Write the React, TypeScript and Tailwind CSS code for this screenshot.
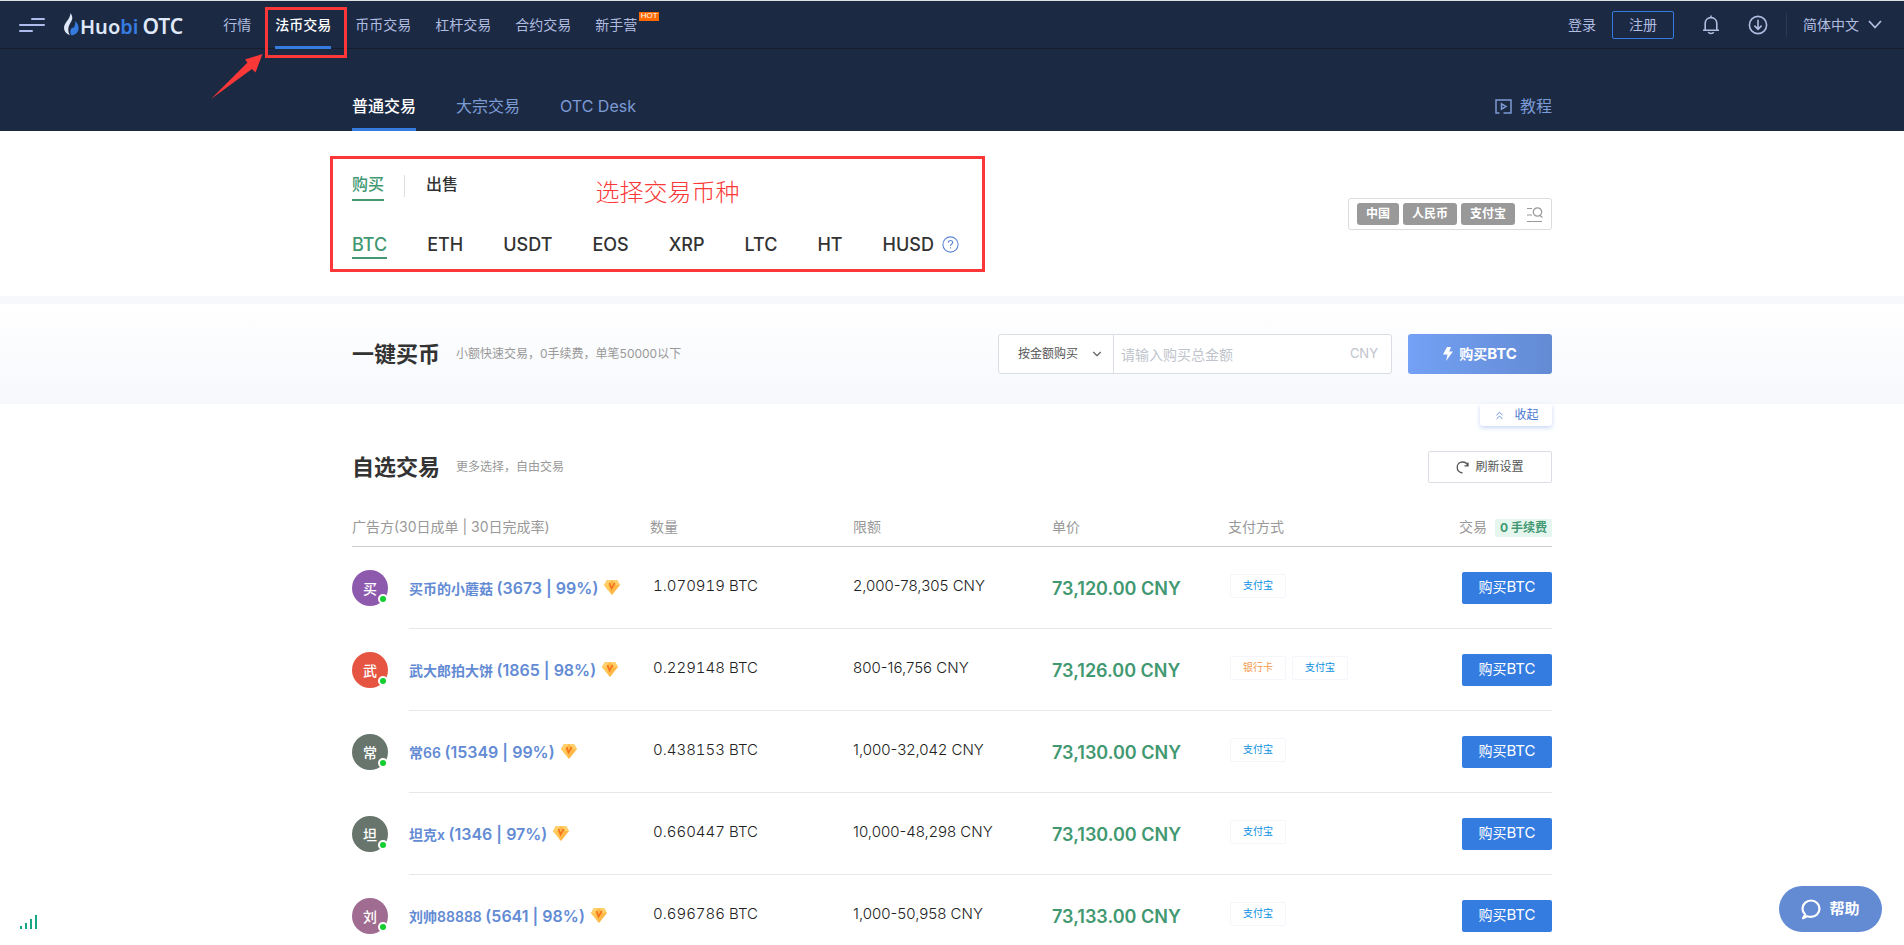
import { useState } from 'react'
import { ChevronDown, ChevronsUp } from 'lucide-react'
import clsx from 'clsx'

type Payment = 'alipay' | 'bank'

interface Offer {
  name: string
  orders: number
  rate: number
  avatarBg: string
  amount: string
  limit: string
  price: string
  payments: Payment[]
}

const NAV = ['行情', '法币交易', '币币交易', '杠杆交易', '合约交易', '新手营']
const MARKETS = ['普通交易', '大宗交易', 'OTC Desk']
const COINS = ['BTC', 'ETH', 'USDT', 'EOS', 'XRP', 'LTC', 'HT', 'HUSD']
const FILTERS = ['中国', '人民币', '支付宝']

const OFFERS: Offer[] = [
  { name: '买币的小蘑菇', orders: 3673, rate: 99, avatarBg: 'bg-[#8e5aae]', amount: '1.070919', limit: '2,000-78,305', price: '73,120.00', payments: ['alipay'] },
  { name: '武大郎拍大饼', orders: 1865, rate: 98, avatarBg: 'bg-[#e55541]', amount: '0.229148', limit: '800-16,756', price: '73,126.00', payments: ['bank', 'alipay'] },
  { name: '常66', orders: 15349, rate: 99, avatarBg: 'bg-[#67756d]', amount: '0.438153', limit: '1,000-32,042', price: '73,130.00', payments: ['alipay'] },
  { name: '坦克x', orders: 1346, rate: 97, avatarBg: 'bg-[#67756d]', amount: '0.660447', limit: '10,000-48,298', price: '73,130.00', payments: ['alipay'] },
  { name: '刘帅88888', orders: 5641, rate: 98, avatarBg: 'bg-[#a06c91]', amount: '0.696786', limit: '1,000-50,958', price: '73,133.00', payments: ['alipay'] },
]

const PAYMENT_LABEL: Record<Payment, string> = { alipay: '支付宝', bank: '银行卡' }
const PAYMENT_COLOR: Record<Payment, string> = { alipay: 'text-[#0a8fe0]', bank: 'text-[#f39a4e]' }

function Logo() {
  return (
    <a href="#" className="ml-[18px] flex items-center gap-px font-['Noto_Sans'] text-[20px] leading-6 font-semibold text-[#dfe8f8]">
      <svg width="15" height="23" viewBox="0 0 15 23">
        <path d="M6.5 0C8.6 3 9 5.600 7.200 8.600C5.500 11.400 4.300 13.500 4.300 16.500C4.300 19 4.900 20.800 6 22.200C2 21 0 18.300 0 14.800C0 9.500 6.300 6.500 6.500 0Z" fill="#dfe8f8" />
        <path d="M11.200 8C13.300 10 14.600 12.400 14.600 15.200C14.600 19 12 21.600 7.500 22.400C6.200 20.500 5.900 18.500 6.800 16.500C7.500 15 8.300 14.700 9.200 14.900C10.800 13.500 11.600 11 11.200 8Z" fill="#357ce1" />
      </svg>
      <span className="flex items-baseline gap-1 pt-[3px]">
        <span>Huo<span className="text-[#357ce1]">bi</span></span>
        <span className="text-[21px]">OTC</span>
      </span>
    </a>
  )
}

function Header() {
  return (
    <header className="flex h-12 items-center border-b border-[#161d2c] pr-[22px] pl-[19px] text-[14px] text-[#b0bde0]">
      <button type="button" aria-label="菜单">
        <svg width="27" height="14" viewBox="0 0 27 14" fill="#aebbec">
          <rect x="12" y="0" width="14" height="2" rx="1" />
          <rect x="0" y="6" width="26" height="2" rx="1" />
          <rect x="0" y="12" width="14" height="2" rx="1" />
        </svg>
      </button>
      <Logo />

      <nav className="ml-10 flex h-12 gap-6">
        {NAV.map(item => (
          <div key={item} className="relative flex">
            <a
              href="#"
              className={clsx(
                'flex items-center border-y-3 border-t-transparent',
                item === '法币交易' ? 'border-b-[#357ce1] font-medium text-white' : 'border-b-transparent',
              )}
            >
              {item}
            </a>
            {item === '法币交易' && (
              <>
                <span className="pointer-events-none absolute top-[6px] -left-[10px] h-[51px] w-[82px] border-3 border-[#fb3737]" />
                <svg className="pointer-events-none absolute top-[52px] -left-[64px]" width="54" height="47" viewBox="0 0 54 47">
                  <path d="M51.500 1L34 6.500L36.500 9.500L0 46L41 16L44.500 19.500Z" fill="#fb3737" />
                </svg>
              </>
            )}
            {item === '新手营' && (
              <span className="absolute top-[11px] left-full ml-[2px] flex h-[9px] w-5 items-center justify-center bg-[#ff6a00] font-['Liberation_Sans'] text-[8px] text-white">
                HOT
              </span>
            )}
          </div>
        ))}
      </nav>

      <div className="ml-auto flex items-center">
        <a href="#">登录</a>
        <button type="button" className="ml-4 h-7 w-[62px] rounded-[2px] border border-[#357ce1]">注册</button>
        <button type="button" aria-label="通知" className="ml-7">
          <svg width="18" height="20" viewBox="0 0 18 20" fill="none" stroke="currentColor" strokeWidth="1.600">
            <path d="M1 15.200H17M3.200 15V8.500C3.200 5 5.600 2.600 9 2.600C12.400 2.600 14.800 5 14.800 8.500V15M9 0.500V2.500M6.300 17.200C7.300 18.900 10.700 18.900 11.700 17.200" />
          </svg>
        </button>
        <button type="button" aria-label="下载" className="ml-7">
          <svg width="20" height="20" viewBox="0 0 20 20" fill="none" stroke="currentColor" strokeWidth="1.600">
            <circle cx="10" cy="10" r="8.600" />
            <path d="M10 4.800V14.300M6.400 10.600L10 14.300L13.600 10.600" />
          </svg>
        </button>
        <span className="ml-[18px] h-6 w-px bg-[#2c3954]" />
        <label className="relative ml-4 flex items-center">
          <select aria-label="语言" className="w-[79px] appearance-none bg-transparent outline-none">
            <option>简体中文</option>
          </select>
          <svg className="pointer-events-none absolute right-0" width="14" height="9" viewBox="0 0 14 9" fill="none" stroke="currentColor" strokeWidth="1.800">
            <path d="M1 1L7 7.500L13 1" />
          </svg>
        </label>
      </div>
    </header>
  )
}

function MarketBar() {
  return (
    <div className="mx-auto flex h-[82px] max-w-[1200px] items-end justify-between text-[16px] leading-6 text-[#7b9bd4]">
      <nav className="flex gap-10">
        {MARKETS.map((m, i) => (
          <a
            key={m}
            href="#"
            className={clsx('border-b-3 pb-[10px]', i === 0 ? 'border-[#357ce1] font-medium text-white' : 'border-transparent')}
          >
            {m}
          </a>
        ))}
      </nav>
      <a href="#" className="flex items-center gap-2 pb-[13px]">
        <svg width="17" height="15" viewBox="0 0 17 15" fill="none" stroke="currentColor" strokeWidth="1.500">
          <path d="M4.500 14H1V1H16V14H8.500M6.500 4.800V10.200L11 7.500Z" />
        </svg>
        教程
      </a>
    </div>
  )
}

function CoinPicker({ coin, onChange }: { coin: string; onChange: (coin: string) => void }) {
  return (
    <section className="relative mx-auto flex max-w-[1200px] items-start justify-between pt-[41px] pb-[37px]">
      <div className="text-[16px] leading-6 font-medium text-[#333]">
        <div className="flex items-start">
          <button type="button" className="h-[29px] border-b-2 border-[#419871] pb-[3px] text-[#419871]">购买</button>
          <span className="mt-[3px] ml-5 h-[22px] w-px bg-[#dedede]" />
          <button type="button" className="ml-[21px] h-6">出售</button>
        </div>
        <div className="mt-[30px] flex gap-10 text-[18px]">
          {COINS.map(c => (
            <button
              key={c}
              type="button"
              onClick={() => onChange(c)}
              className={clsx('h-7 border-b-2 pt-[1px]', c === coin ? 'border-[#419871] text-[#419871]' : 'border-transparent')}
            >
              {c}
            </button>
          ))}
          <button type="button" aria-label="帮助说明" className="-ml-8 flex h-[26px] items-center">
            <svg width="17" height="17" viewBox="0 0 17 17" fill="none" stroke="#5f86d6" strokeWidth="1.100">
              <circle cx="8.500" cy="8.500" r="7.600" />
              <path d="M6.300 6.800C6.300 5.300 7.300 4.500 8.500 4.500C9.800 4.500 10.700 5.300 10.700 6.500C10.700 8 8.500 8.100 8.500 9.900M8.500 11.300V12.600" />
            </svg>
          </button>
        </div>
      </div>

      <div className="mt-[26px] flex h-8 items-center gap-1 rounded-[3px] border border-[#dcdcdc] px-2 text-[12px] font-bold text-white">
        {FILTERS.map(f => (
          <span key={f} className="flex h-[22px] items-center rounded-[3px] bg-[#999] px-[9px]">{f}</span>
        ))}
        <button type="button" aria-label="筛选" className="ml-2">
          <svg width="16" height="17" viewBox="0 0 16 17" fill="none" stroke="#999" strokeWidth="1.200">
            <path d="M0 2.500H5M0 9H5M0 15.500H15M13 9.500L15.500 11.500" />
            <circle cx="10.500" cy="6" r="4.200" />
          </svg>
        </button>
      </div>

      <div className="pointer-events-none absolute top-[25px] -left-[22px] flex h-[116px] w-[655px] justify-center border-3 border-[#fb3737] pt-4 pl-5">
        <span className="text-[24px] leading-9 font-light text-[#fb3737]">选择交易币种</span>
      </div>
    </section>
  )
}

function QuickBuy({ coin }: { coin: string }) {
  return (
    <section className="border-t-8 border-[#f6f8fc] bg-linear-to-b from-white to-[#f6f8fc]">
      <div className="mx-auto flex h-[100px] max-w-[1200px] items-center">
        <h2 className="text-[22px] font-bold text-[#333]">一键买币</h2>
        <p className="ml-4 text-[12px] text-[#999]">小额快速交易，0手续费，单笔50000以下</p>
        <div className="ml-auto flex h-10 w-[394px] items-center rounded-[3px] border border-[#dadde3] bg-white">
          <label className="relative flex h-full w-[115px] items-center border-r border-[#dadde3]">
            <select aria-label="购买方式" className="h-full w-full appearance-none bg-transparent pl-[19px] text-[12px] text-[#555] outline-none">
              <option>按金额购买</option>
            </select>
            <ChevronDown size={14} className="pointer-events-none absolute right-[9px] text-[#666]" />
          </label>
          <input
            aria-label="购买总金额"
            placeholder="请输入购买总金额"
            className="h-full min-w-0 flex-1 px-[7px] text-[14px] outline-none placeholder:text-[#c0c4cc]"
          />
          <span className="pr-[13px] text-[13px] text-[#c0c4cc]">CNY</span>
        </div>
        <button
          type="button"
          className="ml-4 flex h-10 w-36 items-center justify-center gap-[6px] rounded-[3px] bg-linear-to-r from-[#74a1f5] to-[#638bd4] text-[14px] font-bold text-white"
        >
          <svg width="10" height="14" viewBox="0 0 10 14" fill="currentColor">
            <path d="M4 0H8L6.200 4.500H10L3 14L4.500 7.500H0Z" />
          </svg>
          <span>购买<span className="text-[15px]">{coin}</span></span>
        </button>
      </div>
    </section>
  )
}

function VipBadge() {
  return (
    <svg width="16" height="15" viewBox="0 0 16 15">
      <path d="M3 0H13L16 5L8 15L0 5Z" fill="#ffb845" />
      <path d="M3 0L0 5H4L8 0ZM13 0L16 5H12L8 0Z" fill="#ffd06b" />
      <path d="M4 5L8 15L0 5Z" fill="#ffc95d" />
      <path d="M5.500 3L7.500 8.500L10.800 3" fill="none" stroke="#f5701c" strokeWidth="1.500" />
    </svg>
  )
}

function OfferRow({ offer, coin }: { offer: Offer; coin: string }) {
  return (
    <tr className="h-[82px]">
      <td>
        <div className={clsx('relative flex h-9 w-9 items-center justify-center rounded-full text-[14px] font-medium text-white', offer.avatarBg)}>
          {offer.name[0]}
          <span className="absolute right-0 bottom-[2px] h-[10px] w-[10px] rounded-full border-2 border-white bg-[#13ce2e]" />
        </div>
      </td>
      <td className="border-b border-[#e8e8e8]">
        <a href="#" className="flex items-center gap-[6px] text-[14px] font-semibold text-[#638bd4]">
          <span className="whitespace-nowrap">
            {offer.name} <span className="text-[16px]">({offer.orders} | {offer.rate}%)</span>
          </span>
          <VipBadge />
        </a>
      </td>
      <td className="border-b border-[#e8e8e8] pb-[2px] pl-[3px] text-[15px] font-light text-[#222] tabular-nums">{offer.amount} BTC</td>
      <td className="border-b border-[#e8e8e8] pb-[2px] text-[15px] font-light text-[#222]">{offer.limit} CNY</td>
      <td className="border-b border-[#e8e8e8] pt-[2px] text-[18px] font-semibold text-[#419871]">{offer.price} CNY</td>
      <td className="border-b border-[#e8e8e8] pb-1 pl-[2px]">
        <div className="flex gap-[6px]">
          {offer.payments.map(p => (
            <span key={p} className={clsx('flex h-6 w-14 items-center justify-center rounded-[2px] border border-[#f4f6fb] text-[10px]', PAYMENT_COLOR[p])}>
              {PAYMENT_LABEL[p]}
            </span>
          ))}
        </div>
      </td>
      <td className="border-b border-[#e8e8e8]">
        <button type="button" className="ml-auto block h-8 w-[90px] rounded-[2px] bg-[#357ce1] text-[14px] text-white">
          购买<span className="text-[15px]">{coin}</span>
        </button>
      </td>
    </tr>
  )
}

function OfferTable({ coin }: { coin: string }) {
  return (
    <section className="mx-auto max-w-[1200px]">
      <div className="flex justify-end">
        <button type="button" className="flex h-[22px] w-[72px] items-center justify-center gap-2 rounded-b-[3px] text-[12px] text-[#4a78d0] shadow-[0_2px_4px_#c9d8f5]">
          <ChevronsUp size={13} strokeWidth={1.5} />
          收起
        </button>
      </div>
      <div className="mt-[25px] flex h-8 items-center">
        <h2 className="text-[22px] font-bold text-[#333]">自选交易</h2>
        <p className="ml-4 text-[12px] text-[#999]">更多选择，自由交易</p>
        <button type="button" className="ml-auto flex h-8 w-[124px] items-center justify-center gap-[6px] rounded-[2px] border border-[#dadde3] text-[12px] text-[#555]">
          <svg width="13" height="13" viewBox="0 0 13 13" fill="none" stroke="currentColor" strokeWidth="1.300">
            <path d="M6.500 12C3.300 11.500 1.200 9.200 1.200 6.300C1.200 3.300 3.500 1 6.500 1C9 1 11 2.300 11.700 4.500M8.500 4.800H12V1.500" />
          </svg>
          刷新设置
        </button>
      </div>

      <table className="mt-[25px] w-full table-fixed border-separate border-spacing-0 text-left">
        <colgroup>
          <col className="w-[57px]" />
          <col className="w-[241px]" />
          <col className="w-[203px]" />
          <col className="w-[199px]" />
          <col className="w-[176px]" />
          <col />
          <col className="w-[120px]" />
        </colgroup>
        <thead>
          <tr className="h-[39px] text-[14px] text-[#999] [&>th]:border-b [&>th]:border-[#ccc] [&>th]:pb-[2px] [&>th]:font-normal">
            <th colSpan={2}>广告方(30日成单 | 30日完成率)</th>
            <th>数量</th>
            <th>限额</th>
            <th>单价</th>
            <th>支付方式</th>
            <th>
              <div className="flex items-end justify-end gap-2">
                交易
                <span className="flex h-[18px] items-center rounded-[2px] bg-[#e5f6ee] px-[5px] text-[12px] font-bold text-[#419871]">0 手续费</span>
              </div>
            </th>
          </tr>
        </thead>
        <tbody>
          {OFFERS.map(o => <OfferRow key={o.name} offer={o} coin={coin} />)}
        </tbody>
      </table>
    </section>
  )
}

export default function App() {
  const [coin, setCoin] = useState('BTC')

  return (
    <div className="h-screen overflow-hidden border-t border-[#dfe1e4] bg-white font-[Inter,'Noto_Sans_CJK_SC',sans-serif]">
      <div className="bg-[#1c2943]">
        <Header />
        <MarketBar />
      </div>
      <CoinPicker coin={coin} onChange={setCoin} />
      <QuickBuy coin={coin} />
      <OfferTable coin={coin} />

      {/* Network status */}
      <svg className="fixed bottom-4 left-5" width="18" height="14" viewBox="0 0 18 14" fill="#14a884">
        <rect x="0" y="11" width="2" height="3" />
        <rect x="5" y="8" width="2" height="6" />
        <rect x="10" y="4" width="2" height="10" />
        <rect x="15" y="0" width="2" height="14" />
      </svg>

      <button type="button" className="fixed right-[22px] bottom-[13px] flex h-[46px] w-[103px] items-center justify-center gap-2 rounded-full bg-[#638bd4] text-[15px] font-bold text-white">
        <svg width="20" height="21" viewBox="0 0 20 21" fill="none" stroke="currentColor" strokeWidth="2.200" strokeLinecap="round" strokeLinejoin="round">
          <path d="M4.200 15.500C2.600 14 1.500 12 1.500 9.700C1.500 5.200 5.400 1.500 10.100 1.500C14.800 1.500 18.500 5.200 18.500 9.700C18.500 14.300 14.700 17.900 10 17.900C8.500 17.900 7.300 17.600 6.200 17.200L2 19.200L4.200 15.500Z" />
        </svg>
        帮助
      </button>
    </div>
  )
}
